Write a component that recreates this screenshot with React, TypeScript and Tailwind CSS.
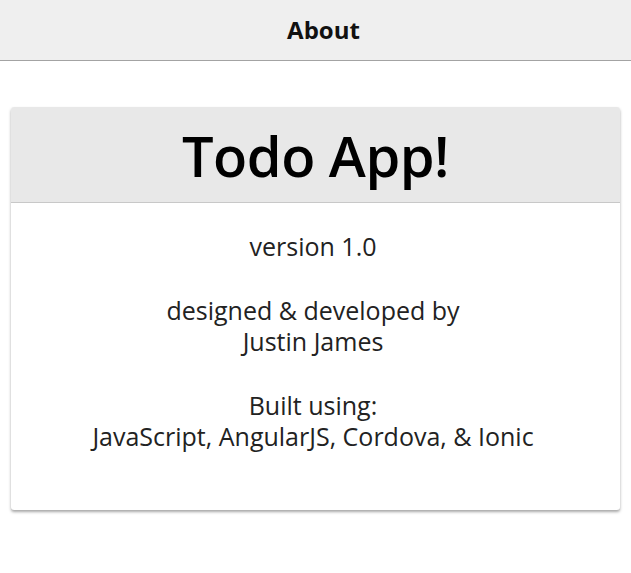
import React from "react";

const App: React.FC = () => {
  return (
    <div className="min-h-screen bg-white font-['Open_Sans',sans-serif] text-[#222]">
      <div className="h-[61px] bg-[#efefef] border-b border-[#a3a3a3] flex items-center justify-center pl-4">
        <p className="font-bold text-[24px] text-[#111]">About</p>
      </div>
      <div className="mx-[11px] mt-[46px] bg-white rounded-[3px] shadow-[0_2px_3px_rgba(0,0,0,0.35)] overflow-hidden">
        <div className="h-[96px] bg-[#e8e8e8] border-b border-[#c8c8c8] flex items-center justify-center">
          <h1 className="font-semibold text-[56px] text-black tracking-[-0.5px]">Todo App!</h1>
        </div>
        <div className="flex flex-col items-center text-center text-[25px] leading-[31px] pt-[28px] pb-[58px] pr-[5px] gap-[33px]">
          <p>version 1.0</p>
          <p>
            designed &amp; developed by
            <br />
            Justin James
          </p>
          <p>
            Built using:
            <br />
            JavaScript, AngularJS, Cordova, &amp; Ionic
          </p>
        </div>
      </div>
    </div>
  );
};

export default App;
